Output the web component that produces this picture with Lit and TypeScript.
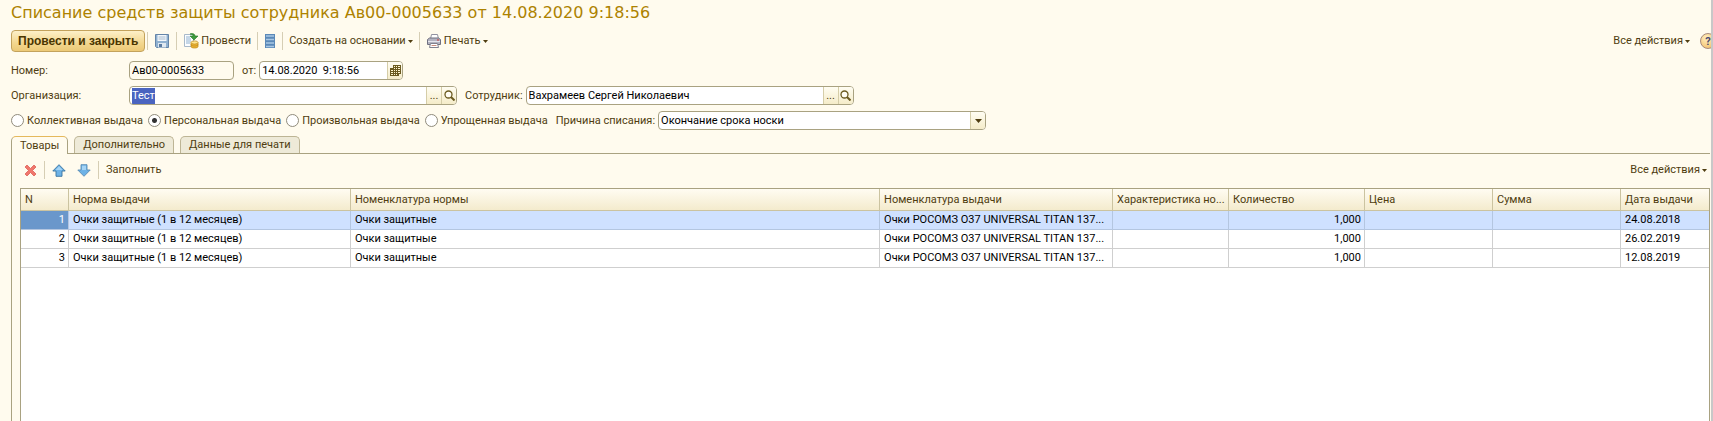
import { LitElement, html, css, svg, nothing } from "lit";
import { customElement, state, query } from "lit/decorators.js";
import { classMap } from "lit/directives/class-map.js";

interface Row {
  norm: string;
  normItem: string;
  issueItem: string;
  quantity: string;
  date: string;
}

const ROWS: Row[] = ["24.08.2018", "26.02.2019", "12.08.2019"].map((date) => ({
  norm: "Очки защитные (1 в 12 месяцев)",
  normItem: "Очки защитные",
  issueItem: "Очки РОСОМЗ О37 UNIVERSAL TITAN 137...",
  quantity: "1,000",
  date,
}));

const ISSUE_KINDS = [
  "Коллективная выдача",
  "Персональная выдача",
  "Произвольная выдача",
  "Упрощенная выдача",
];

const TABS = ["Товары", "Дополнительно", "Данные для печати"];

const icon = (w: number, h: number, body: unknown) =>
  html`<svg width=${w} height=${h} viewBox="0 0 ${w} ${h}" aria-hidden="true">${body}</svg>`;

const caret = () => icon(5, 3, svg`<path d="M0 0h5L2.5 3z" fill="#4f3d10"/>`);

const saveIcon = () =>
  icon(16, 16, svg`
    <path d="M1.5 1.5h13v13h-12l-1-1z" fill="#8fb0d0" stroke="#6585a8"/>
    <path d="M3.5 2h9v6h-9z" fill="#f3f7fb"/>
    <path d="M4.5 4h7M4.5 6h7" stroke="#a9bccf"/>
    <path d="M4 10h8v4.5H4z" fill="#dfe8f0"/>
    <path d="M5 11h3v3H5z" fill="#5a7aa0"/>`);

const postIcon = () =>
  icon(16, 16, svg`
    <path d="M1.5 1.5h9v12h-9z" fill="#fbfdff" stroke="#a8b9c9"/>
    <path d="M3 4h4M3 6h5M3 8h5M3 10h4" stroke="#8fb0cf"/>
    <path d="M7 1c3-1 5 0 5 2h3l-4 4-4-4h3c0-1-1-2-3-2z" fill="#3c9a3c" stroke="#237523" stroke-width=".6"/>
    <path d="M8 9.5v4c0 2 7 2 7 0v-4z" fill="#f0b83a" stroke="#b98212" stroke-width=".7"/>
    <ellipse cx="11.5" cy="9.5" rx="3.5" ry="1.6" fill="#ffe48c" stroke="#b98212" stroke-width=".7"/>
    <path d="M8 11.5c0 2 7 2 7 0" fill="none" stroke="#b98212" stroke-width=".7"/>`);

const listIcon = () =>
  icon(12, 14, svg`
    <path d="M1 0h10v14H1z" fill="#5b89b8"/>
    <path d="M2 2h8M2 5.5h8M2 9h8M2 12.5h8" stroke="#a9c8e4" stroke-width="1.5"/>`);

const printIcon = () =>
  icon(16, 16, svg`
    <path d="M4.5 6L5.5 1.5h6l1 4.5z" fill="#fff" stroke="#9292a0"/>
    <path d="M1.500 6.500l2-1.500h9l2 1.500v5h-13z" fill="#b3b3c0" stroke="#707080"/>
    <path d="M2 8.500h12" stroke="#e5e5ee"/>
    <path d="M11 7h2" stroke="#c33"/>
    <path d="M4.500 10.500h7l1 4h-9z" fill="#fff" stroke="#80808e"/>
    <path d="M5.500 12.500h5" stroke="#c98c7e"/>`);

const calendarIcon = () =>
  icon(11, 11, svg`
    <path d="M3 0h8v9H9v2H0V3h3z" fill="#6b5a20"/>
    <path d="M4 1h1v1H4zM6 1h1v1H6zM8 1h2v1H8zM4 3h1v1H4zM6 3h1v1H6zM8 3h2v1H8zM4 5h1v1H4zM6 5h1v1H6zM8 5h2v1H8zM4 7h1v1H4zM6 7h1v1H6zM8 7h2v1H8zM1 5h2v1H1zM1 7h2v1H1zM1 9h2v1H1zM4 9h1v1H4zM6 9h1v1H6z" fill="#fff6d0"/>`);

const searchIcon = () =>
  icon(11, 11, svg`
    <circle cx="4.500" cy="4.500" r="3.500" fill="#fffdf4" stroke="#6b5a20" stroke-width="1.300"/>
    <path d="M7 7l3.500 3.500" stroke="#6b5a20" stroke-width="2"/>`);

const deleteIcon = () =>
  icon(13, 13, svg`
    <path d="M1 3l2-2 3.500 3.500L10 1l2 2-3.500 3.500L12 10l-2 2-3.500-3.500L3 12l-2-2 3.500-3.500z" fill="#f0776c" stroke="#dd6058" stroke-width=".8"/>`);

const upIcon = () =>
  icon(14, 13, svg`
    <path d="M7 .7L13.200 7H10v5.300H4V7H.8z" fill="#6db2e6" stroke="#37729f" stroke-width=".9"/>
    <path d="M7 2.300L10.500 6H3.500z" fill="#a5d4f5"/>`);

const downIcon = () =>
  icon(14, 13, svg`
    <path d="M7 12.300L.8 6H4V.7h6V6h3.200z" fill="#6db2e6" stroke="#5a8cb4" stroke-width=".9"/>
    <path d="M5 1.700h4V6H5z" fill="#a5d4f5"/>`);

@customElement("app-root")
export class AppRoot extends LitElement {
  static styles = css`
    :host {
      display: block;
      font: 11px/16px Roboto, "Liberation Sans", sans-serif;
      color: #4f3d10;
    }
    * {
      box-sizing: border-box;
    }
    svg {
      display: block;
      flex: none;
    }
    button,
    input,
    select {
      font: inherit;
      color: inherit;
      margin: 0;
      padding: 0;
      border: 0;
      background: none;
      outline: none;
      border-radius: 0;
    }
    .window {
      display: flex;
      flex-direction: column;
      height: 100vh;
      overflow: hidden;
      background: #fffbee;
      border-right: 2px solid #c8c8c8;
      padding-left: 11px;
    }
    .title {
      margin: 0;
      padding-top: 1px;
      font: 16px/23px "DejaVu Sans", Verdana, sans-serif;
      color: #ad8200;
      white-space: nowrap;
    }
    .toolbar {
      display: flex;
      align-items: center;
      height: 22px;
      margin-top: 6px;
      gap: 6px;
    }
    .tool {
      display: flex;
      align-items: center;
      gap: 2px;
      white-space: nowrap;
    }
    .primary {
      height: 22px;
      padding: 0 6px;
      border: 1px solid #c3a25c;
      border-radius: 4px;
      background: linear-gradient(#fdf0c8, #f3d78f 60%, #ecc977);
      font: bold 12px/16px "Liberation Sans", Arial, sans-serif;
      color: #4a3500;
      white-space: nowrap;
    }
    .lead {
      display: flex;
      align-items: center;
      gap: 2px;
    }
    .sep {
      width: 1px;
      height: 18px;
      background: #d6ceb4;
    }
    .spacer {
      flex: 1;
    }
    .help {
      display: grid;
      place-items: center;
      width: 16px;
      height: 16px;
      margin: 0 -5px 0 4px;
      border: 1px solid #a88a7c;
      border-radius: 50%;
      background: radial-gradient(circle at 40% 30%, #fff0c0, #f0b860);
      font-weight: bold;
      color: #4a4a70;
      flex: none;
    }
    .line {
      display: flex;
      align-items: center;
      height: 19px;
      white-space: nowrap;
    }
    .line-number {
      margin-top: 9px;
    }
    .line-next {
      margin-top: 6px;
    }
    .caption {
      width: 118px;
      flex: none;
    }
    .inner-caption {
      margin: 0 3px 0 8px;
    }
    .field {
      display: flex;
      height: 19px;
      border: 1px solid #a9a281;
      border-radius: 4px;
      background: #fff;
      color: #000;
      overflow: hidden;
      flex: none;
    }
    .field input,
    .field select {
      flex: 1;
      min-width: 0;
      padding: 0 2px;
    }
    .field select {
      appearance: none;
    }
    .field input::selection {
      background: #4a64c0;
      color: #fff;
    }
    .readonly {
      width: 105px;
      background: #fffbee;
    }
    .date {
      width: 144px;
    }
    .reference {
      width: 328px;
    }
    .addon {
      display: grid;
      place-items: center;
      width: 15px;
      border-left: 1px solid #d5cda8;
      background: linear-gradient(#fffdf2, #f5ecc9);
      color: #4f3d10;
      pointer-events: none;
      flex: none;
    }
    button.addon {
      pointer-events: auto;
    }
    .radios {
      display: flex;
      gap: 5px;
    }
    .radio {
      display: flex;
      align-items: center;
      gap: 3px;
    }
    .radio input {
      appearance: none;
      width: 13px;
      height: 13px;
      border: 1px solid #908b7c;
      border-radius: 50%;
      background: #fff;
    }
    .radio input:checked {
      background: radial-gradient(circle, #333 2px, #fff 3px);
    }
    .tabs {
      display: flex;
      align-items: flex-end;
      gap: 6px;
      height: 17px;
      margin-top: 6px;
    }
    .tab {
      height: 17px;
      padding: 0 8px;
      border: 1px solid #bdb595;
      border-bottom: 0;
      border-radius: 5px 5px 0 0;
      background: #eeead8;
      white-space: nowrap;
    }
    .tab.active {
      height: 18px;
      margin-bottom: -1px;
      border-color: #a9a281;
      border-top-color: #e5b95c;
      background: #fffbee;
      z-index: 1;
    }
    .panel {
      display: flex;
      flex-direction: column;
      flex: 1;
      min-height: 0;
      border: solid #a9a281;
      border-width: 1px 0 0 1px;
      padding-left: 8px;
      margin-right: 1px;
    }
    .commands {
      display: flex;
      align-items: center;
      height: 34px;
      gap: 7px;
      padding: 0 3px 2px 4px;
      flex: none;
    }
    .arrows {
      display: flex;
      gap: 11px;
    }
    .grid-box {
      flex: 1;
      min-height: 0;
      border: solid #a9a281;
      border-width: 1px 1px 0;
      background: #fff;
      overflow: hidden;
    }
    table {
      width: 100%;
      border-collapse: separate;
      border-spacing: 0;
      table-layout: fixed;
      color: #000;
    }
    th,
    td {
      padding: 0 4px;
      text-align: left;
      font-weight: normal;
      white-space: nowrap;
      overflow: hidden;
      text-overflow: ellipsis;
      border-right: 1px solid #cfcfcf;
      border-bottom: 1px solid #cfcfcf;
    }
    th:last-child,
    td:last-child {
      border-right: 0;
    }
    th {
      height: 22px;
      padding-right: 2px;
      border-color: #cbc3a0;
      background: linear-gradient(#fffcf2, #f4ebcd);
      color: #4f3d10;
    }
    td {
      height: 19px;
    }
    td.num {
      text-align: right;
      padding-right: 3px;
    }
    .selected td {
      background: #cfe1ff;
      border-color: #b4c6e0;
    }
    .selected td:first-child {
      background: #6a97cb;
      color: #fff;
    }
    .c-n { width: 48px; }
    .c-norm { width: 16.7%; }
    .c-issue { width: 13.8%; }
    .c-char { width: 116px; }
    .c-qty { width: 136px; }
    .c-sum { width: 128px; }
    .c-date { width: 88px; }
  `;

  @state() private activeTab = 0;
  @state() private issueKind = 1;
  @state() private selectedRow = 0;
  @query("#organization") private organization!: HTMLInputElement;

  firstUpdated() {
    this.organization.focus();
    this.organization.select();
  }

  private renderReference(id: string, value: string) {
    return html`<div class="field reference">
      <input id=${id} type="text" .value=${value} />
      <button class="addon" aria-label="Выбрать">...</button>
      <button class="addon" aria-label="Открыть">${searchIcon()}</button>
    </div>`;
  }

  render() {
    return html`<main class="window">
      <h1 class="title">Списание средств защиты сотрудника Ав00-0005633 от 14.08.2020 9:18:56</h1>

      <div class="toolbar">
        <div class="lead">
          <button class="primary">Провести и закрыть</button>
          <span class="sep"></span>
        </div>
        <button class="tool" aria-label="Записать">${saveIcon()}</button>
        <span class="sep"></span>
        <button class="tool">${postIcon()}Провести</button>
        <span class="sep"></span>
        <button class="tool" aria-label="Список">${listIcon()}</button>
        <span class="sep"></span>
        <button class="tool">Создать на основании ${caret()}</button>
        <span class="sep"></span>
        <button class="tool">${printIcon()}Печать ${caret()}</button>
        <span class="spacer"></span>
        <button class="tool">Все действия ${caret()}</button>
        <button class="help" aria-label="Справка">?</button>
      </div>

      <div class="line line-number">
        <label class="caption" for="number">Номер:</label>
        <div class="field readonly"><input id="number" type="text" readonly value="Ав00-0005633" /></div>
        <label class="inner-caption" for="date">от:</label>
        <div class="field date">
          <input id="date" type="text" value="14.08.2020  9:18:56" />
          <button class="addon" aria-label="Календарь">${calendarIcon()}</button>
        </div>
      </div>

      <div class="line line-next">
        <label class="caption" for="organization">Организация:</label>
        ${this.renderReference("organization", "Тест")}
        <label class="inner-caption" for="employee">Сотрудник:</label>
        ${this.renderReference("employee", "Вахрамеев Сергей Николаевич")}
      </div>

      <div class="line line-next">
        <div class="radios" role="radiogroup">
          ${ISSUE_KINDS.map(
            (kind, i) => html`<label class="radio">
              <input type="radio" name="kind" .checked=${i === this.issueKind} @change=${() => (this.issueKind = i)} />${kind}
            </label>`,
          )}
        </div>
        <label class="inner-caption" for="reason">Причина списания:</label>
        <div class="field reference">
          <select id="reason"><option>Окончание срока носки</option></select>
          <span class="addon">${icon(7, 4, svg`<path d="M0 0h7L3.500 4z" fill="#4f3d10"/>`)}</span>
        </div>
      </div>

      <div class="tabs" role="tablist">
        ${TABS.map(
          (tab, i) => html`<button
            class=${classMap({ tab: true, active: i === this.activeTab })}
            role="tab"
            aria-selected=${i === this.activeTab}
            @click=${() => (this.activeTab = i)}
          >${tab}</button>`,
        )}
      </div>

      <section class="panel">
        <div class="commands">
          <button class="tool" aria-label="Удалить">${deleteIcon()}</button>
          <span class="sep"></span>
          <div class="arrows">
            <button class="tool" aria-label="Вверх">${upIcon()}</button>
            <button class="tool" aria-label="Вниз">${downIcon()}</button>
          </div>
          <span class="sep"></span>
          <button class="tool">Заполнить</button>
          <span class="spacer"></span>
          <button class="tool">Все действия ${caret()}</button>
        </div>
        <div class="grid-box">
          <table>
            <thead>
              <tr>
                <th class="c-n">N</th>
                <th class="c-norm">Норма выдачи</th>
                <th>Номенклатура нормы</th>
                <th class="c-issue">Номенклатура выдачи</th>
                <th class="c-char">Характеристика но...</th>
                <th class="c-qty">Количество</th>
                <th class="c-sum">Цена</th>
                <th class="c-sum">Сумма</th>
                <th class="c-date">Дата выдачи</th>
              </tr>
            </thead>
            <tbody>
              ${ROWS.map(
                (row, i) => html`<tr
                  class=${i === this.selectedRow ? "selected" : nothing}
                  @click=${() => (this.selectedRow = i)}
                >
                  <td class="num">${i + 1}</td>
                  <td>${row.norm}</td>
                  <td>${row.normItem}</td>
                  <td>${row.issueItem}</td>
                  <td></td>
                  <td class="num">${row.quantity}</td>
                  <td></td>
                  <td></td>
                  <td>${row.date}</td>
                </tr>`,
              )}
            </tbody>
          </table>
        </div>
      </section>
    </main>`;
  }
}
